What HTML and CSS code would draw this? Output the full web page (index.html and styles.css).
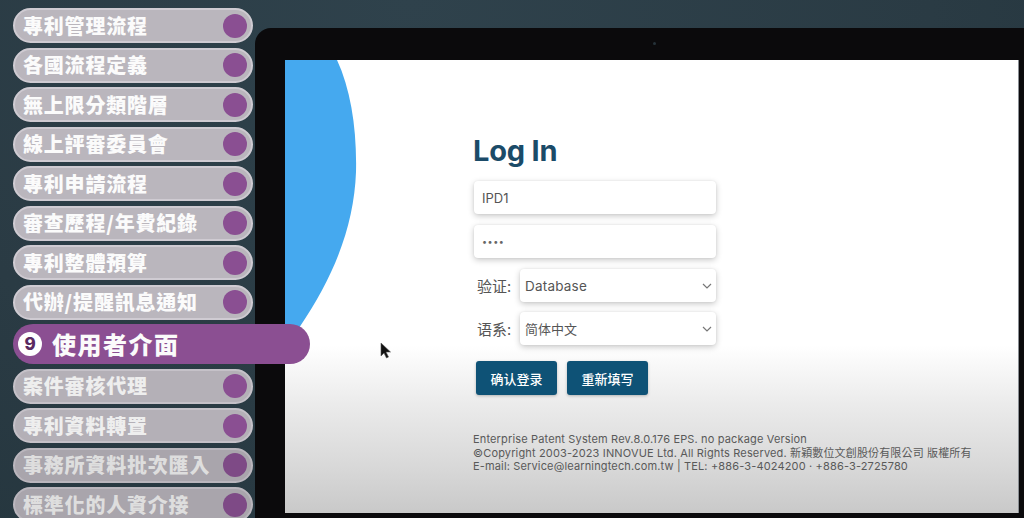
FILE: index.html
```html
<!DOCTYPE html>
<html lang="zh-Hant">
<head>
<meta charset="utf-8">
<title>Log In</title>
<link rel="stylesheet" href="styles.css">
</head>
<body>
<div class="stage">
  <div class="monitor">
    <span class="cam"></span>
    <div class="screen">
      <svg class="blob" width="90" height="300" viewBox="0 0 90 300">
        <path d="M0 0 L52 0 C66 30 72 70 71 112 C69 165 50 215 14 268 L0 290 Z" fill="#45a9ef"/>
      </svg>
      <div class="login">
        <h1 class="title">Log In</h1>
        <div class="field">IPD1</div>
        <div class="field pw">••••</div>
        <div class="row">
          <span class="label">验证:</span>
          <div class="select"><span class="latin">Database</span>
            <svg class="chev" width="10" height="6" viewBox="0 0 10 6"><path d="M1 1 L5 5 L9 1" fill="none" stroke="#777" stroke-width="1.2"/></svg>
          </div>
        </div>
        <div class="row">
          <span class="label">语系:</span>
          <div class="select"><span class="cjk">简体中文</span>
            <svg class="chev" width="10" height="6" viewBox="0 0 10 6"><path d="M1 1 L5 5 L9 1" fill="none" stroke="#777" stroke-width="1.2"/></svg>
          </div>
        </div>
        <div class="buttons">
          <span class="btn">确认登录</span>
          <span class="btn">重新填写</span>
        </div>
        <div class="footer">
          <p>Enterprise Patent System Rev.8.0.176 EPS. no package Version</p>
          <p>©Copyright 2003-2023 INNOVUE Ltd. All Rights Reserved. 新穎數位文創股份有限公司 版權所有</p>
          <p>E-mail: Service@learningtech.com.tw | TEL: +886-3-4024200 · +886-3-2725780</p>
        </div>
      </div>
      <svg class="cursor" width="12" height="17" viewBox="0 0 12 17">
        <path d="M1 1 L1 14 L4 11 L6.5 16 L8.5 15 L6 10 L10.5 10 Z" fill="#111" stroke="#555" stroke-width="0.6"/>
      </svg>
    </div>
  </div>
  <nav class="menu">
    <div class="pill"><span class="txt">專利管理流程</span><span class="dot"></span></div>
    <div class="pill"><span class="txt">各國流程定義</span><span class="dot"></span></div>
    <div class="pill"><span class="txt">無上限分類階層</span><span class="dot"></span></div>
    <div class="pill"><span class="txt">線上評審委員會</span><span class="dot"></span></div>
    <div class="pill"><span class="txt">專利申請流程</span><span class="dot"></span></div>
    <div class="pill"><span class="txt">審查歷程/年費紀錄</span><span class="dot"></span></div>
    <div class="pill"><span class="txt">專利整體預算</span><span class="dot"></span></div>
    <div class="pill"><span class="txt">代辦/提醒訊息通知</span><span class="dot"></span></div>
    <div class="pill active"><span class="badge">9</span><span class="txt">使用者介面</span></div>
    <div class="pill dim1"><span class="txt">案件審核代理</span><span class="dot"></span></div>
    <div class="pill dim1"><span class="txt">專利資料轉置</span><span class="dot"></span></div>
    <div class="pill dim2"><span class="txt">事務所資料批次匯入</span><span class="dot"></span></div>
    <div class="pill dim2"><span class="txt">標準化的人資介接</span><span class="dot"></span></div>
  </nav>
</div>
</body>
</html>
```

FILE: styles.css
```css
* { box-sizing: border-box; }
html, body { margin: 0; padding: 0; }
body { background: #2b3d46; overflow: hidden; }

.stage {
  position: relative;
  width: 1024px;
  height: 518px;
  overflow: hidden;
  display: flex;
  background: radial-gradient(ellipse at 40% 0%, #2f424c 0%, #2a3b44 60%, #24353d 100%);
}

.monitor {
  position: relative;
  flex: 1;
  margin: 28px 0 0 255px;
  height: 490px;
  padding: 32px 5px 5px 30px;
  background: #0b0a0c;
  border-radius: 16px 0 0 0;
  display: flex;
}
.cam {
  position: absolute;
  left: 398px;
  top: 14px;
  width: 3px;
  height: 3px;
  border-radius: 50%;
  background: #26323a;
}

.screen {
  position: relative;
  flex: 1;
  height: 453px;
  overflow: hidden;
  background: linear-gradient(to bottom, #ffffff 0%, #ffffff 63%, #ebebeb 76%, #d8d8d8 90%, #c9c9c9 100%);
  border-right: 1px solid #8a8f94;
}
.blob { position: absolute; left: 0; top: 0; }
.cursor { position: absolute; left: 95px; top: 282px; }

.login {
  position: relative;
  padding: 74px 0 0 189px;
  display: flex;
  flex-direction: column;
  font-family: "Inter", "Noto Sans CJK SC", sans-serif;
}
.title {
  margin: 0 0 13px -1px;
  font-size: 29px;
  line-height: 34px;
  font-weight: 700;
  color: #1b4b68;
  letter-spacing: -0.2px;
}
.field {
  width: 242px;
  height: 33px;
  background: #fff;
  border-radius: 4px;
  box-shadow: 0 2px 6px rgba(0,0,0,0.22), 0 0 2px rgba(0,0,0,0.08);
  padding: 0 8px;
  display: flex;
  align-items: center;
  font-size: 13px;
  color: #555;
  margin-bottom: 11px;
}
.field.pw { font-size: 9px; letter-spacing: 0.5px; color: #666; }

.row {
  display: flex;
  align-items: center;
  margin-bottom: 10px;
}
.label {
  width: 46px;
  padding-left: 3px;
  font-family: "Noto Sans CJK SC", sans-serif;
  font-size: 15px;
  color: #555;
}
.select {
  width: 196px;
  height: 33px;
  background: #fff;
  border-radius: 4px;
  box-shadow: 0 2px 6px rgba(0,0,0,0.22), 0 0 2px rgba(0,0,0,0.08);
  padding: 0 4px 0 5px;
  display: flex;
  align-items: center;
  justify-content: space-between;
  color: #555;
}
.select .latin { font-size: 13.5px; letter-spacing: 0.2px; }
.select .cjk { font-family: "Noto Sans CJK SC", sans-serif; font-size: 13px; }

.buttons {
  display: flex;
  gap: 10px;
  margin: 6px 0 0 2px;
}
.btn {
  width: 81px;
  height: 34px;
  background: #0e5276;
  border-radius: 3px;
  color: #fff;
  font-family: "Noto Sans CJK SC", sans-serif;
  font-size: 13px;
  font-weight: 500;
  display: flex;
  align-items: center;
  justify-content: center;
  box-shadow: 0 1px 3px rgba(0,0,0,0.25);
}

.footer {
  margin: 38px 0 0 -1px;
  color: #595959;
  font-size: 11px;
  line-height: 13.5px;
  letter-spacing: 0.15px;
}
.footer p { margin: 0; white-space: nowrap; }

.menu {
  position: absolute;
  left: 13px;
  top: 8px;
  display: flex;
  flex-direction: column;
  gap: 4.5px;
  font-family: "Noto Sans CJK TC", sans-serif;
}
.pill {
  width: 240px;
  height: 35px;
  border-radius: 18px;
  background: #bab6bd;
  border: 2px solid #cfcbd2;
  display: flex;
  align-items: center;
  justify-content: space-between;
  padding: 0 4px 0 8px;
}
.pill .txt {
  color: #fbfbfb;
  font-size: 20px;
  font-weight: 900;
  letter-spacing: 0.8px;
  line-height: 1;
}
.pill .dot {
  width: 24px;
  height: 24px;
  border-radius: 50%;
  background: #8a4f92;
}
.pill.active {
  width: 297px;
  height: 40px;
  border: none;
  background: #8b4f92;
  border-radius: 20px;
  justify-content: flex-start;
  padding: 0 0 0 5px;
  gap: 10px;
}
.pill.active .txt { font-size: 24px; letter-spacing: 1.5px; }
.badge {
  width: 24px;
  height: 24px;
  border-radius: 50%;
  background: #fff;
  color: #5a2a61;
  font-family: "Inter", sans-serif;
  font-weight: 800;
  font-size: 17px;
  display: flex;
  align-items: center;
  justify-content: center;
}
.pill.dim1 { background: #b4b0b7; border-color: #c5c1c8; }
.pill.dim1 .txt { color: #eeeeee; }
.pill.dim2 { background: #a9a5ac; border-color: #bab6bd; }
.pill.dim2 .txt { color: #dedede; }
.pill.dim2 .dot { background: #7e4a86; }
```
